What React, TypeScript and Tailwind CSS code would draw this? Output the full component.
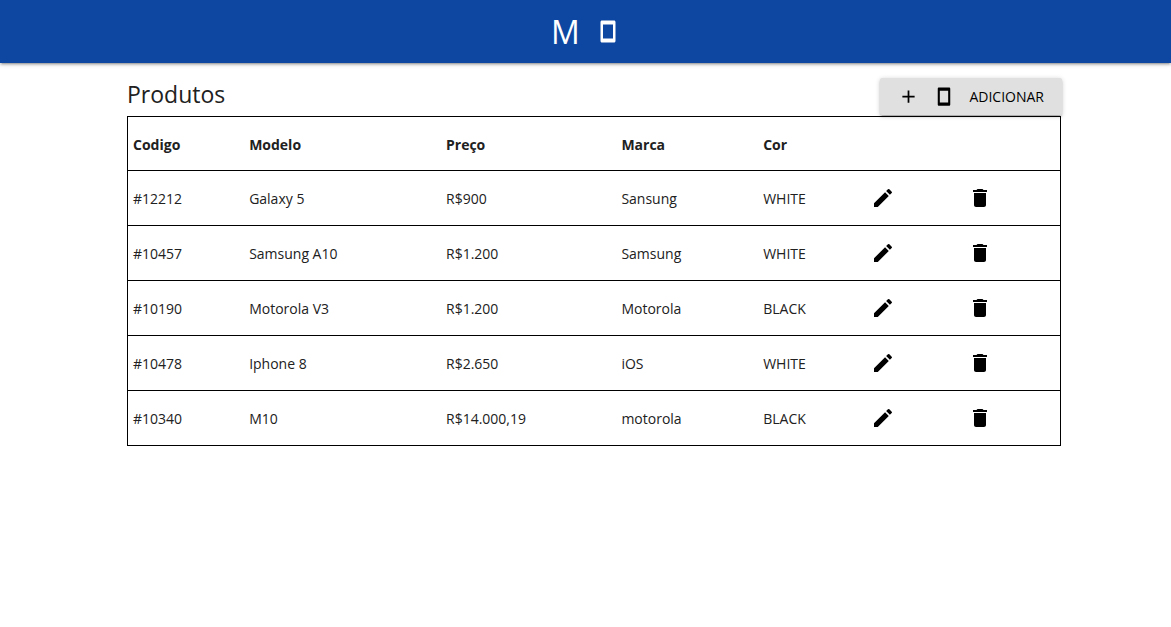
import { MdAdd, MdDelete, MdEdit } from "react-icons/md";

type Product = {
  code: string;
  model: string;
  price: string;
  brand: string;
  color: string;
};

const products: Product[] = [
  { code: "#12212", model: "Galaxy 5", price: "R$900", brand: "Sansung", color: "WHITE" },
  { code: "#10457", model: "Samsung A10", price: "R$1.200", brand: "Samsung", color: "WHITE" },
  { code: "#10190", model: "Motorola V3", price: "R$1.200", brand: "Motorola", color: "BLACK" },
  { code: "#10478", model: "Iphone 8", price: "R$2.650", brand: "iOS", color: "WHITE" },
  { code: "#10340", model: "M10", price: "R$14.000,19", brand: "motorola", color: "BLACK" },
];

function PhoneIcon({ className }: { className: string }) {
  return (
    <svg viewBox="0 0 24 24" fill="currentColor" className={className} aria-hidden="true">
      <path d="M6 .5h12c.9 0 1.5.6 1.5 1.5v19c0 .9-.6 1.5-1.5 1.500H6c-.9 0-1.500-.6-1.500-1.500V2C4.500 1.100 5.100.5 6 .5zM7 4.500v14h10v-14z" />
    </svg>
  );
}

function Header() {
  return (
    <header className="h-[63px] bg-[#0d47a1] text-white shadow-[0_2px_2px_0_rgba(0,0,0,0.14),0_3px_1px_-2px_rgba(0,0,0,0.12),0_1px_5px_0_rgba(0,0,0,0.2)]">
      <a href="#" className="flex h-full items-center justify-center gap-4">
        <span className="text-[32px] leading-[62px]">M</span>
        <PhoneIcon className="size-6" />
      </a>
    </header>
  );
}

function ProductTable() {
  return (
    <table className="w-full table-fixed border-collapse border border-black text-left text-sm">
      <colgroup>
        <col className="w-[12.5%]" />
        <col className="w-[21.1%]" />
        <col className="w-[18.8%]" />
        <col className="w-[15.2%]" />
        <col className="w-[11.6%]" />
        <col className="w-[10.3%]" />
        <col />
      </colgroup>
      <thead>
        <tr className="h-[54px] border-b border-black">
          <th className="px-[5px] pt-0.5 font-bold">Codigo</th>
          <th className="px-[5px] pt-0.5 font-bold">Modelo</th>
          <th className="px-[5px] pt-0.5 font-bold">Preço</th>
          <th className="px-[5px] pt-0.5 font-bold">Marca</th>
          <th className="px-[5px] pt-0.5 font-bold">Cor</th>
          <td />
          <td />
        </tr>
      </thead>
      <tbody>
        {products.map((product) => (
          <tr key={product.code} className="h-[55px] border-b border-black">
            <td className="px-[5px] pt-0.5">{product.code}</td>
            <td className="px-[5px] pt-0.5">{product.model}</td>
            <td className="px-[5px] pt-0.5">{product.price}</td>
            <td className="px-[5px] pt-0.5">{product.brand}</td>
            <td className="px-[5px] pt-0.5">{product.color}</td>
            <td className="px-[5px]">
              <button type="button" aria-label={`Editar ${product.model}`} className="block text-black">
                <MdEdit size={24} />
              </button>
            </td>
            <td className="px-[5px]">
              <button type="button" aria-label={`Excluir ${product.model}`} className="block text-black">
                <MdDelete size={24} />
              </button>
            </td>
          </tr>
        ))}
      </tbody>
    </table>
  );
}

export default function App() {
  return (
    <div className="min-h-screen bg-white font-['Open_Sans','Noto_Sans',sans-serif] text-[#212121]">
      <Header />
      <main className="pt-[15px] pr-[110px] pl-[127px]">
        <div className="flex items-start justify-between pb-px">
          <h1 className="text-[23px] leading-8">Produtos</h1>
          <button
            type="button"
            className="-mr-px flex h-[37px] items-center gap-[15px] rounded-xs bg-[#e0e0e0] px-4 text-sm text-black shadow-[0_2px_2px_0_rgba(0,0,0,0.14),0_3px_1px_-2px_rgba(0,0,0,0.12),0_1px_5px_0_rgba(0,0,0,0.2)]"
          >
            <span className="flex items-center gap-[15px] pl-0.5">
              <MdAdd size={21} aria-hidden="true" />
              <PhoneIcon className="size-5" />
            </span>
            <span className="pr-0.5">ADICIONAR</span>
          </button>
        </div>
        <ProductTable />
      </main>
    </div>
  );
}
